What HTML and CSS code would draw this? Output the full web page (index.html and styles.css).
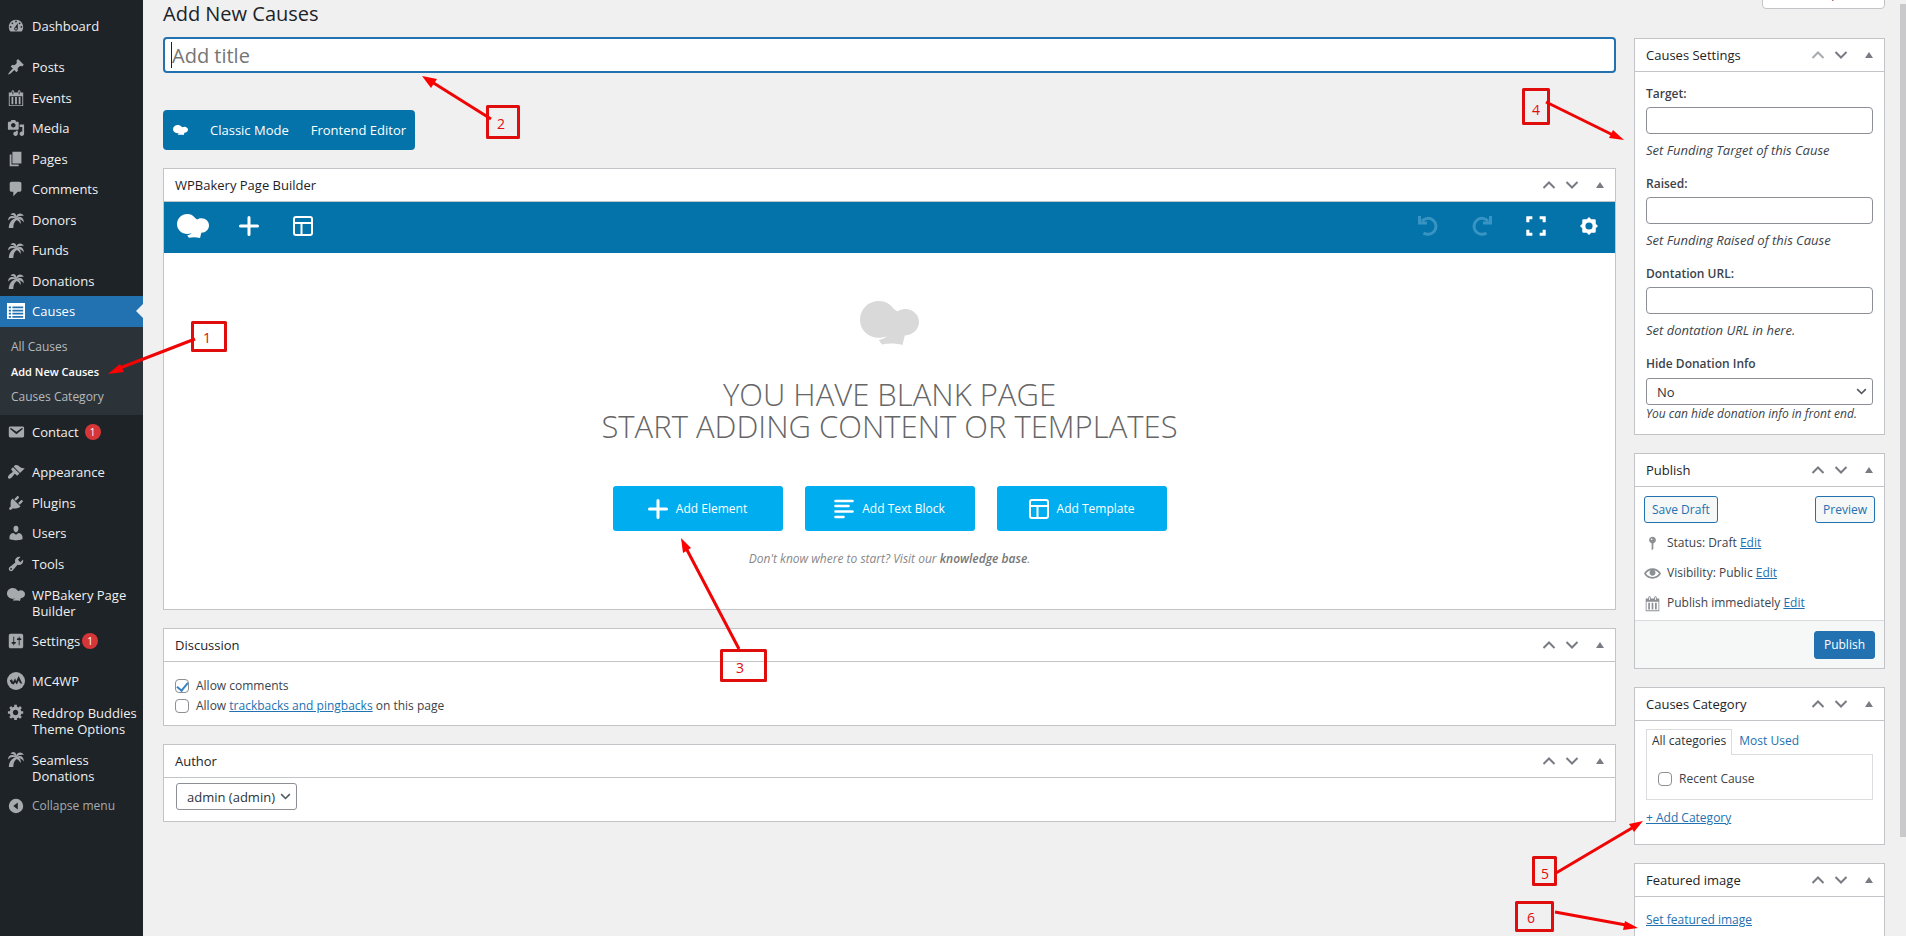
FILE: index.html
```html
<!DOCTYPE html>
<html lang="en">
<head>
<meta charset="utf-8">
<title>Add New Causes</title>
<link rel="stylesheet" href="styles.css">
</head>
<body>
<svg class="sprite" aria-hidden="true">
  <symbol id="i-dashboard" viewBox="0 0 20 20"><path fill-rule="evenodd" d="M3.76 16h12.48c1.1-1.37 1.76-3.11 1.76-5 0-4.42-3.58-8-8-8s-8 3.58-8 8c0 1.89.66 3.63 1.76 5zM10 4c.55 0 1 .45 1 1s-.45 1-1 1-1-.45-1-1 .45-1 1-1zM6 6c.55 0 1 .45 1 1s-.45 1-1 1-1-.45-1-1 .45-1 1-1zm8 0c.55 0 1 .45 1 1s-.45 1-1 1-1-.45-1-1 .45-1 1-1zm-5.37 5.55L12 7v6c0 1.1-.9 2-2 2s-2-.9-2-2c0-.57.24-1.08.63-1.45zM4 10c.55 0 1 .45 1 1s-.45 1-1 1-1-.45-1-1 .45-1 1-1zm12 0c.55 0 1 .45 1 1s-.45 1-1 1-1-.45-1-1 .45-1 1-1zm-5 3c0-.55-.45-1-1-1s-1 .45-1 1 .45 1 1 1 1-.45 1-1z"/></symbol>
  <symbol id="i-post" viewBox="0 0 20 20"><path d="M10.44 3.02l1.82-1.82 6.36 6.35-1.83 1.82c-1.05-.68-2.48-.57-3.41.36l-.75.75c-.92.93-1.04 2.35-.35 3.41l-1.83 1.82-2.41-2.41-2.8 2.79c-.42.42-3.38 2.71-3.8 2.29s1.86-3.39 2.28-3.81l2.79-2.79L4.1 9.36l1.83-1.82c1.05.69 2.48.57 3.4-.36l.75-.75c.93-.92 1.05-2.35.36-3.41z"/></symbol>
  <symbol id="i-calendar" viewBox="0 0 20 20"><path fill-rule="evenodd" d="M15 4h3v15H2V4h3V3c0-.41.15-.76.44-1.06.29-.29.65-.44 1.06-.44s.77.15 1.06.44c.29.3.44.65.44 1.06v1h4V3c0-.41.15-.76.44-1.06.29-.29.65-.44 1.06-.44s.77.15 1.06.44c.29.3.44.65.44 1.06v1zM6 3v2.5c0 .3.2.5.5.5s.5-.2.5-.5V3c0-.3-.2-.5-.5-.5S6 2.7 6 3zm7 0v2.5c0 .3.2.5.5.5s.5-.2.5-.5V3c0-.3-.2-.5-.5-.5s-.5.2-.5.5zm4 15V8H3v10h14zM7 9v8H5V9h2zm4 0v8H9V9h2zm4 0v8h-2V9h2z"/></symbol>
  <symbol id="i-media" viewBox="0 0 20 20"><path fill-rule="evenodd" d="M13 11V4c0-.55-.45-1-1-1h-1.67L9 1H5L3.67 3H2c-.55 0-1 .45-1 1v7c0 .55.45 1 1 1h10c.55 0 1-.45 1-1zM7 4.5c1.38 0 2.5 1.12 2.5 2.5S8.38 9.5 7 9.5 4.5 8.38 4.5 7 5.62 4.5 7 4.5zM14 6h5v10.5c0 1.38-1.12 2.5-2.5 2.5S14 17.88 14 16.5s1.12-2.5 2.5-2.5c.17 0 .34.02.5.05V9h-3V6zm-4 8.05V13h2v3.5c0 1.38-1.12 2.5-2.5 2.5S7 17.88 7 16.5 8.12 14 9.5 14c.17 0 .34.02.5.05z"/></symbol>
  <symbol id="i-pages" viewBox="0 0 20 20"><path d="M6 15V2h10v13H6zm-1 1h8v2H3V5h2v11z"/></symbol>
  <symbol id="i-comment" viewBox="0 0 20 20"><path d="M5 2h9c1.1 0 2 .9 2 2v7c0 1.1-.9 2-2 2h-2l-5 5v-5H5c-1.1 0-2-.9-2-2V4c0-1.1.9-2 2-2z"/></symbol>
  <symbol id="i-palm" viewBox="0 0 20 20"><path d="M10 8C9 5.500 7 4 4 4.200 5 1.500 9.500.800 10.800 6z"/><path d="M10 8.500C7 7 3.500 7.500 1.500 10.500 .800 7 4 4 9.800 6.200z"/><path d="M9.800 7.500C11 2.500 15.500 1 18.800 5.400 15.500 4.800 12.500 5.500 10.300 8z"/><path d="M10 8C14 5.200 19.200 7 18.500 12.800 17.200 9.800 14 8.500 10 9z"/><path d="M10 8C14 8.300 16.200 10.500 15 14.500 13.500 11.500 12 10.200 9.500 9.800z"/><path d="M2 19C2 13.500 4.800 9.600 9.600 7.800L10.800 10C8 12 7 15 7 19z"/></symbol>
  <symbol id="i-list" viewBox="0 0 20 20"><path fill-rule="evenodd" d="M0 1h20v18H0zM2 5h2.500v2H2zm4 0h12v2H6zM2 8.500h2.500v2H2zm4 0h12v2H6zM2 12h2.500v2H2zm4 0h12v2H6zM2 15.500h2.500v2H2zm4 0h12v2H6z"/></symbol>
  <symbol id="i-email" viewBox="0 0 20 20"><path fill-rule="evenodd" d="M3.870 4h13.250C18.370 4 19 4.590 19 5.790v8.420c0 1.190-.63 1.790-1.880 1.790H3.870c-1.250 0-1.880-.6-1.880-1.790V5.790c0-1.200.63-1.790 1.880-1.790zm6.620 8.600l6.740-5.530c.24-.2.43-.66.13-1.070-.29-.41-.82-.42-1.170-.17l-5.700 3.860L4.800 5.830c-.35-.25-.88-.24-1.170.17-.3.41-.11.87.13 1.070z"/></symbol>
  <symbol id="i-brush" viewBox="0 0 20 20"><path d="M14.480 11.060L7.410 3.990l1.500-1.500c.5-.56 2.300-.47 3.510.32 1.210.8 1.430 1.280 2.910 2.100 1.180.64 2.450 1.260 4.450.85zm-.71.71L6.700 4.700 4.930 6.470c-.39.39-.39 1.020 0 1.410l1.060 1.060c.39.39.39 1.030 0 1.420-.6.6-1.430 1.110-2.210 1.690-.35.26-.7.53-1.010.84C1.430 14.230.4 16.080 1.400 17.070c.99 1 2.840-.03 4.180-1.360.31-.31.58-.66.85-1.020.57-.78 1.080-1.610 1.690-2.210.39-.39 1.020-.39 1.410 0l1.060 1.060c.39.39 1.020.39 1.410 0z"/></symbol>
  <symbol id="i-plug" viewBox="0 0 20 20"><path d="M13.110 4.360L9.870 7.600 8 5.730l3.240-3.240c.35-.34 1.050-.2 1.560.32.52.51.66 1.210.31 1.550zm-8 1.770l.91-1.120 9.010 9.010-1.190.84c-.71.71-2.630 1.160-3.820 1.160H6.140L4.900 17.260c-.59.59-1.540.59-2.120 0-.59-.58-.59-1.530 0-2.120l1.240-1.240v-3.880c0-1.130.4-3.190 1.090-3.890zm7.260 3.970l3.240-3.240c.34-.35 1.040-.21 1.550.31.52.51.66 1.210.31 1.550l-3.240 3.250z"/></symbol>
  <symbol id="i-user" viewBox="0 0 20 20"><path d="M10 9.250c-2.270 0-2.730-3.440-2.730-3.440C7 4.020 7.820 2 9.970 2c2.160 0 2.980 2.020 2.710 3.810 0 0-.41 3.440-2.680 3.440zm0 2.570L12.720 10c2.390 0 4.520 2.330 4.520 4.530v2.490s-3.650 1.130-7.240 1.130c-3.650 0-7.240-1.130-7.240-1.130v-2.490c0-2.250 1.940-4.480 4.470-4.480z"/></symbol>
  <symbol id="i-wrench" viewBox="0 0 20 20"><path fill-rule="evenodd" d="M16.680 9.770c-1.340 1.340-3.300 1.670-4.950.99l-5.410 6.520c-.99.99-2.590.99-3.580 0s-.99-2.590 0-3.570l6.520-5.420c-.68-1.650-.35-3.610.99-4.950 1.280-1.280 3.120-1.620 4.720-1.060l-2.890 2.890 2.820 2.820 2.860-2.870c.53 1.580.18 3.390-1.080 4.650zM3.810 16.210c.4.39 1.040.39 1.430 0 .4-.4.4-1.040 0-1.430-.39-.4-1.030-.4-1.430 0-.39.39-.39 1.030 0 1.430z"/></symbol>
  <symbol id="i-sliders" viewBox="0 0 20 20"><path fill-rule="evenodd" d="M18 16V4c0-1.100-.9-2-2-2H4c-1.100 0-2 .9-2 2v12c0 1.100.9 2 2 2h12c1.100 0 2-.9 2-2zM8 11h1c.55 0 1 .45 1 1s-.45 1-1 1H8v1.500c0 .28-.22.5-.5.5s-.5-.22-.5-.5V13H6c-.55 0-1-.45-1-1s.45-1 1-1h1V5.500c0-.28.22-.5.5-.5s.5.22.5.5V11zm5-2h-1c-.55 0-1-.45-1-1s.45-1 1-1h1V5.500c0-.28.22-.5.5-.5s.5.22.5.5V7h1c.55 0 1 .45 1 1s-.45 1-1 1h-1v5.500c0 .28-.22.5-.5.5s-.5-.22-.5-.5V9z"/></symbol>
  <symbol id="i-mc" viewBox="0 0 20 20"><circle cx="10" cy="10" r="10"/><path class="cut" d="M3 9.500L5.500 8l1.200 3L9 7l1.200 3.200L13 4.500l4 8.500-2.500-.5L13 9.500l-2 4.500-2-2.500L7.500 14 5 13z"/></symbol>
  <symbol id="i-gear" viewBox="0 0 20 20"><path fill-rule="evenodd" d="M18 12h-2.180c-.17.7-.44 1.350-.81 1.930l1.540 1.540-2.100 2.100-1.540-1.540c-.58.36-1.230.63-1.910.79V19H8v-2.180c-.68-.16-1.330-.43-1.910-.79l-1.540 1.540-2.120-2.120 1.540-1.540c-.36-.58-.63-1.230-.79-1.910H1V9.030h2.170c.16-.7.44-1.350.8-1.940L2.430 5.550l2.100-2.100 1.540 1.540c.58-.37 1.240-.64 1.930-.81V2h3v2.180c.68.16 1.330.43 1.910.79l1.540-1.540 2.120 2.120-1.540 1.540c.36.59.64 1.240.8 1.940H18V12zm-8.500 1.500c1.660 0 3-1.340 3-3s-1.340-3-3-3-3 1.340-3 3 1.340 3 3 3z"/></symbol>
  <symbol id="i-collapse" viewBox="0 0 20 20"><path fill-rule="evenodd" d="M10 2a8 8 0 1 1 0 16 8 8 0 0 1 0-16zm2 4v8l-5-4z"/></symbol>
  <symbol id="i-pin" viewBox="0 0 20 20"><path fill-rule="evenodd" d="M14 6c0 1.860-1.280 3.410-3 3.860V16c0 1-2 2-2 2V9.860c-1.720-.45-3-2-3-3.860 0-2.210 1.790-4 4-4s4 1.790 4 4zM8 5c0 .55.45 1 1 1s1-.45 1-1-.45-1-1-1-1 .45-1 1z"/></symbol>
  <symbol id="i-eye" viewBox="0 0 20 20"><path fill-rule="evenodd" d="M19.700 9.400C17.700 6 14 3.900 10 3.900S2.300 6 .3 9.400L0 10l.3.6c2 3.400 5.700 5.500 9.700 5.500s7.700-2.100 9.700-5.500l.3-.6zM10 14.100c-3.100 0-6-1.600-7.700-4.100C3.600 8 5.700 6.600 8 6.100c-.9.6-1.500 1.700-1.500 2.900 0 1.900 1.600 3.500 3.500 3.500s3.500-1.600 3.500-3.500c0-1.200-.6-2.300-1.500-2.900 2.300.5 4.400 1.900 5.700 3.900-1.700 2.500-4.600 4.100-7.700 4.100z"/></symbol>
  <symbol id="i-cloud" viewBox="0 0 50 44" preserveAspectRatio="none"><path d="M16 0c6 0 9 3 12 7 2 2.500 4 4 7 4.200-1 .3-2.300.2-3.500-.4C33.500 8.800 36 8 38 8c7 0 12 6 12 13s-5 13-12 13.500L36 44c-6-2-12-2-17.500-.5L16 39c3-.7 5.500-2 7-3.700-2.500 1-5 1.600-8 1.500C6 36 0 28 0 19 0 8 7 0 16 0z"/></symbol>
  <symbol id="i-plus" viewBox="0 0 20 20"><path d="M10 1.500v17M1.500 10h17" fill="none" stroke="currentColor" stroke-width="3" stroke-linecap="round"/></symbol>
  <symbol id="i-layout" viewBox="0 0 20 20"><path d="M3 1h14q2 0 2 2v14q0 2-2 2H3q-2 0-2-2V3q0-2 2-2zM1 7h18M8.500 7v12" fill="none" stroke="currentColor" stroke-width="2"/></symbol>
  <symbol id="i-text" viewBox="0 0 20 20"><path d="M1.500 2h17M1.500 7h13M1.500 12.500h17M1.500 18h8" fill="none" stroke="currentColor" stroke-width="2.600" stroke-linecap="round"/></symbol>
  <symbol id="i-undo" viewBox="0 0 20 20"><path d="M5.500 17A8 8 0 1 0 4 5M1.500 0v7H9" fill="none" stroke="currentColor" stroke-width="3"/></symbol>
  <symbol id="i-full" viewBox="0 0 22 22"><path d="M2 7V2h5M15 2h5v5M20 15v5h-5M7 20H2v-5" fill="none" stroke="currentColor" stroke-width="3.400"/></symbol>
  <symbol id="i-cog" viewBox="0 0 20 20"><path fill-rule="evenodd" d="M10 0l2.500 2.500H16q1.500 0 1.500 1.500v3.500L20 10l-2.500 2.500V16q0 1.500-1.500 1.500h-3.500L10 20l-2.500-2.500H4q-1.500 0-1.500-1.500v-3.500L0 10l2.500-2.500V4q0-1.500 1.500-1.500h3.500zm0 6a4 4 0 1 0 0 8 4 4 0 0 0 0-8z"/></symbol>
  <symbol id="i-up" viewBox="0 0 14 14"><path d="M1.500 10L7 4.500 12.500 10" fill="none" stroke="currentColor" stroke-width="2"/></symbol>
  <symbol id="i-down" viewBox="0 0 14 14"><path d="M1.500 4L7 9.500 12.500 4" fill="none" stroke="currentColor" stroke-width="2"/></symbol>
  <symbol id="i-tri" viewBox="0 0 8 6"><path d="M4 0l4 6H0z"/></symbol>
</svg>

<div class="shell">
  <nav class="menu" aria-label="Main menu">
    <ul class="menu-group">
      <li><a class="item" href="#"><svg class="icon"><use href="#i-dashboard"/></svg>Dashboard</a></li>
    </ul>
    <ul class="menu-group">
      <li><a class="item" href="#"><svg class="icon"><use href="#i-post"/></svg>Posts</a></li>
      <li><a class="item" href="#"><svg class="icon"><use href="#i-calendar"/></svg>Events</a></li>
      <li><a class="item" href="#"><svg class="icon"><use href="#i-media"/></svg>Media</a></li>
      <li><a class="item" href="#"><svg class="icon"><use href="#i-pages"/></svg>Pages</a></li>
      <li><a class="item" href="#"><svg class="icon"><use href="#i-comment"/></svg>Comments</a></li>
      <li><a class="item" href="#"><svg class="icon"><use href="#i-palm"/></svg>Donors</a></li>
      <li><a class="item" href="#"><svg class="icon"><use href="#i-palm"/></svg>Funds</a></li>
      <li><a class="item" href="#"><svg class="icon"><use href="#i-palm"/></svg>Donations</a></li>
      <li><a class="item current" href="#"><svg class="icon"><use href="#i-list"/></svg>Causes</a>
        <ul class="submenu">
          <li><a href="#">All Causes</a></li>
          <li><a class="active" href="#">Add New Causes</a></li>
          <li><a href="#">Causes Category</a></li>
        </ul>
      </li>
      <li><a class="item" href="#"><svg class="icon"><use href="#i-email"/></svg>Contact <span class="count wide">1</span></a></li>
    </ul>
    <ul class="menu-group">
      <li><a class="item" href="#"><svg class="icon"><use href="#i-brush"/></svg>Appearance</a></li>
      <li><a class="item" href="#"><svg class="icon"><use href="#i-plug"/></svg>Plugins</a></li>
      <li><a class="item" href="#"><svg class="icon"><use href="#i-user"/></svg>Users</a></li>
      <li><a class="item" href="#"><svg class="icon"><use href="#i-wrench"/></svg>Tools</a></li>
      <li><a class="item two-line" href="#"><svg class="icon cloud"><use href="#i-cloud"/></svg>WPBakery Page<br>Builder</a></li>
      <li><a class="item" href="#"><svg class="icon"><use href="#i-sliders"/></svg>Settings<span class="count">1</span></a></li>
    </ul>
    <ul class="menu-group">
      <li><a class="item" href="#"><svg class="icon"><use href="#i-mc"/></svg>MC4WP</a></li>
      <li><a class="item two-line" href="#"><svg class="icon"><use href="#i-gear"/></svg>Reddrop Buddies<br>Theme Options</a></li>
      <li><a class="item two-line" href="#"><svg class="icon"><use href="#i-palm"/></svg>Seamless<br>Donations</a></li>
      <li><button class="item collapse" type="button"><svg class="icon"><use href="#i-collapse"/></svg>Collapse menu</button></li>
    </ul>
  </nav>

  <main class="content">
    <h1 class="page-title">Add New Causes</h1>
    <button class="screen-options" type="button">Screen Options</button>
    <div class="columns">
      <div class="primary">
        <input class="title-input" type="text" placeholder="Add title" aria-label="Add title">
        <div class="mode-switch">
          <svg class="mode-logo"><use href="#i-cloud"/></svg>
          <button type="button">Classic Mode</button>
          <button type="button">Frontend Editor</button>
        </div>

        <section class="box">
          <header class="box-head"><h2>WPBakery Page Builder</h2>
            <div class="handles"><button type="button" aria-label="Move up"><svg><use href="#i-up"/></svg></button><button type="button" aria-label="Move down"><svg><use href="#i-down"/></svg></button><button class="toggle" type="button" aria-label="Toggle panel"><svg><use href="#i-tri"/></svg></button></div>
          </header>
          <div class="toolbar">
            <svg class="brand"><use href="#i-cloud"/></svg>
            <button type="button" aria-label="Add element"><svg><use href="#i-plus"/></svg></button>
            <button type="button" aria-label="Templates"><svg><use href="#i-layout"/></svg></button>
            <span class="spacer"></span>
            <button type="button" disabled aria-label="Undo"><svg><use href="#i-undo"/></svg></button>
            <button type="button" disabled aria-label="Redo"><svg class="flip"><use href="#i-undo"/></svg></button>
            <button type="button" aria-label="Full screen"><svg><use href="#i-full"/></svg></button>
            <button type="button" aria-label="Page settings"><svg class="cog"><use href="#i-cog"/></svg></button>
          </div>
          <div class="blank">
            <svg class="blank-logo"><use href="#i-cloud"/></svg>
            <h3>YOU HAVE BLANK PAGE<br>START ADDING CONTENT OR TEMPLATES</h3>
            <div class="actions">
              <button type="button"><svg><use href="#i-plus"/></svg>Add Element</button>
              <button type="button"><svg><use href="#i-text"/></svg>Add Text Block</button>
              <button type="button"><svg><use href="#i-layout"/></svg>Add Template</button>
            </div>
            <p class="tip">Don't know where to start? Visit our <a href="#">knowledge base</a>.</p>
          </div>
        </section>

        <section class="box">
          <header class="box-head"><h2>Discussion</h2>
            <div class="handles"><button type="button" aria-label="Move up"><svg><use href="#i-up"/></svg></button><button type="button" aria-label="Move down"><svg><use href="#i-down"/></svg></button><button class="toggle" type="button" aria-label="Toggle panel"><svg><use href="#i-tri"/></svg></button></div>
          </header>
          <div class="discussion">
            <label class="check"><input type="checkbox" checked><span>Allow comments</span></label>
            <label class="check"><input type="checkbox"><span>Allow <a href="#">trackbacks and pingbacks</a> on this page</span></label>
          </div>
        </section>

        <section class="box">
          <header class="box-head"><h2>Author</h2>
            <div class="handles"><button type="button" aria-label="Move up"><svg><use href="#i-up"/></svg></button><button type="button" aria-label="Move down"><svg><use href="#i-down"/></svg></button><button class="toggle" type="button" aria-label="Toggle panel"><svg><use href="#i-tri"/></svg></button></div>
          </header>
          <div class="author">
            <span class="select"><select aria-label="Author"><option>admin (admin)</option></select><svg><use href="#i-down"/></svg></span>
          </div>
        </section>
      </div>

      <aside class="secondary">
        <section class="box">
          <header class="box-head"><h2>Causes Settings</h2>
            <div class="handles"><button type="button" disabled aria-label="Move up"><svg><use href="#i-up"/></svg></button><button type="button" aria-label="Move down"><svg><use href="#i-down"/></svg></button><button class="toggle" type="button" aria-label="Toggle panel"><svg><use href="#i-tri"/></svg></button></div>
          </header>
          <div class="fields">
            <div class="field"><label for="target">Target:</label><input id="target" type="text"><p>Set Funding Target of this Cause</p></div>
            <div class="field"><label for="raised">Raised:</label><input id="raised" type="text"><p>Set Funding Raised of this Cause</p></div>
            <div class="field"><label for="url">Dontation URL:</label><input id="url" type="text"><p>Set dontation URL in here.</p></div>
            <div class="field tight"><label for="hide">Hide Donation Info</label><span class="select"><select id="hide"><option>No</option></select><svg><use href="#i-down"/></svg></span><p>You can hide donation info in front end.</p></div>
          </div>
        </section>

        <section class="box">
          <header class="box-head"><h2>Publish</h2>
            <div class="handles"><button type="button" aria-label="Move up"><svg><use href="#i-up"/></svg></button><button type="button" aria-label="Move down"><svg><use href="#i-down"/></svg></button><button class="toggle" type="button" aria-label="Toggle panel"><svg><use href="#i-tri"/></svg></button></div>
          </header>
          <div class="publish-actions"><button class="btn" type="button">Save Draft</button><button class="btn" type="button">Preview</button></div>
          <ul class="status">
            <li><svg><use href="#i-pin"/></svg><span>Status: <b>Draft</b> <a href="#">Edit</a></span></li>
            <li><svg><use href="#i-eye"/></svg><span>Visibility: <b>Public</b> <a href="#">Edit</a></span></li>
            <li><svg><use href="#i-calendar"/></svg><span><b>Publish immediately</b> <a href="#">Edit</a></span></li>
          </ul>
          <footer class="publish-foot"><button class="btn primary-btn" type="button">Publish</button></footer>
        </section>

        <section class="box">
          <header class="box-head"><h2>Causes Category</h2>
            <div class="handles"><button type="button" aria-label="Move up"><svg><use href="#i-up"/></svg></button><button type="button" aria-label="Move down"><svg><use href="#i-down"/></svg></button><button class="toggle" type="button" aria-label="Toggle panel"><svg><use href="#i-tri"/></svg></button></div>
          </header>
          <div class="category">
            <div class="tabs"><a class="tab on" href="#">All categories</a><a class="tab" href="#">Most Used</a></div>
            <div class="tab-panel"><label class="check"><input type="checkbox"><span>Recent Cause</span></label></div>
            <a class="add" href="#">+ Add Category</a>
          </div>
        </section>

        <section class="box">
          <header class="box-head"><h2>Featured image</h2>
            <div class="handles"><button type="button" aria-label="Move up"><svg><use href="#i-up"/></svg></button><button type="button" aria-label="Move down"><svg><use href="#i-down"/></svg></button><button class="toggle" type="button" aria-label="Toggle panel"><svg><use href="#i-tri"/></svg></button></div>
          </header>
          <div class="featured"><a href="#">Set featured image</a></div>
        </section>
      </aside>
    </div>
  </main>
  <div class="scroll-thumb"></div>

  <svg class="notes" width="1906" height="936" viewBox="0 0 1906 936">
    <g fill="none" stroke="#e00d0d" stroke-width="3" stroke-linejoin="round">
      <rect x="192.500" y="322.500" width="33" height="28"/>
      <rect x="487.500" y="106.500" width="31" height="31"/>
      <rect x="721.500" y="650.500" width="44" height="30"/>
      <rect x="1523.500" y="89.500" width="25" height="34"/>
      <rect x="1533.500" y="857.500" width="22" height="27"/>
      <rect x="1516.500" y="902.500" width="36" height="28"/>
    </g>
    <g stroke="#f00505" stroke-width="3">
      <path d="M195 339L120 368"/><path d="M491 119L432 82"/><path d="M739 649L686 548"/>
      <path d="M1546 102L1613 135"/><path d="M1556 873L1632 828"/><path d="M1555 912L1626 925"/>
    </g>
    <g fill="#ff0000">
      <path d="M108 374l12-10 4 8z"/><path d="M422 76l15 3-6 9z"/><path d="M681 538l10 10-8 5z"/>
      <path d="M1624 140l-11-10-4 8z"/><path d="M1643 821l-14 3 5 8z"/><path d="M1638 928l-13-7-2 9z"/>
    </g>
    <g class="note-text" fill="#e00d0d">
      <text x="203" y="343">1</text><text x="497" y="129">2</text><text x="736" y="673">3</text>
      <text x="1532" y="115">4</text><text x="1541" y="879">5</text><text x="1527" y="923">6</text>
    </g>
  </svg>
</div>
</body>
</html>
```

FILE: styles.css
```css
* { box-sizing: border-box; }
html { overflow: hidden; }
body { margin: 0; background: #f0f0f1; color: #3c434a; font: 12px/18px "Open Sans", "Noto Sans", sans-serif; }
ul { list-style: none; margin: 0; padding: 0; }
h1, h2, h3, p { margin: 0; font-weight: 400; }
a { color: #2271b1; }
button, input, select { font: inherit; color: inherit; margin: 0; }
button { border: 0; background: none; padding: 0; cursor: pointer; }
svg { display: block; fill: currentColor; }
.sprite { position: absolute; width: 0; height: 0; }
.cut { fill: #1d2327; }

.shell { display: flex; position: relative; min-height: 100vh; }

/* Admin menu */
.menu { flex: 0 0 143px; background: #1d2327; padding-top: 11px; display: flex; flex-direction: column; gap: 10px; }
.item { display: flex; width: 100%; min-height: 31px; padding: 7px 0 7px 32px; position: relative; color: #f0f0f1; font-size: 13px; line-height: 16px; text-decoration: none; white-space: nowrap; text-align: left; }
li:nth-child(even) > .item { min-height: 30px; }
.item.two-line { padding-top: 8px; }
.item .icon { position: absolute; left: 7px; top: 6px; width: 18px; height: 18px; color: #a7aaad; }
.item .icon.cloud { top: 9px; height: 13px; }
.item.current { background: #2271b1; color: #fff; }
.item.current .icon { color: #fff; }
.item.current::after { content: ""; position: absolute; right: 0; top: 8px; border: 7px solid transparent; border-left: 0; border-right-color: #f0f0f1; }
.item.collapse { color: #a7aaad; font-size: 12px; }
.count { width: 16px; height: 16px; margin-left: 2px; border-radius: 8px; background: #d63638; color: #fff; font-size: 10px; text-align: center; }
.count.wide { margin-left: 6px; }
.submenu { background: #2c3338; padding: 7px 0 6px 11px; margin-bottom: 2px; }
.submenu a { display: block; padding: 4px 0 3px; color: #b4b9be; font-size: 12px; text-decoration: none; }
.submenu a.active { color: #fff; font-size: 11px; font-weight: 600; }

/* Page */
.content { flex: 1; min-width: 0; padding: 0 21px 0 20px; overflow: hidden; height: 100vh; position: relative; }
.page-title { color: #1d2327; font-size: 20px; line-height: 28px; height: 37px; }
.screen-options { position: absolute; top: -24px; right: 21px; width: 123px; height: 33px; padding: 2px 0 0; border: 1px solid #c3c4c7; border-radius: 0 0 4px 4px; background: #fff; }
.columns { display: flex; gap: 18px; }
.primary { flex: 1; min-width: 0; }
.secondary { flex: 0 0 251px; padding-top: 1px; }

.title-input { display: block; width: 100%; height: 36px; padding: 0 7px; border: 2px solid #2271b1; border-radius: 4px; background: linear-gradient(#1d2327, #1d2327) 6px center / 1px 26px no-repeat #fff; font-size: 20px; outline: 0; }
.title-input::placeholder { color: #757575; opacity: 1; }
.mode-switch { display: flex; width: fit-content; align-items: center; gap: 22px; height: 40px; margin: 37px 0 18px; padding: 0 9px 0 10px; border-radius: 4px; background: #0473aa; color: #fff; }
.mode-switch button { font-size: 13px; }
.mode-logo { width: 15px; height: 10px; }

.box { background: #fff; border: 1px solid #c3c4c7; margin-bottom: 18px; }
.box-head { display: flex; justify-content: space-between; align-items: center; height: 33px; padding: 0 11px; border-bottom: 1px solid #c3c4c7; }
.box-head h2 { font-size: 13px; font-weight: 500; color: #1d2327; }
.handles { display: flex; align-items: center; gap: 9px; color: #787c82; }
.handles svg { width: 14px; height: 14px; }
.handles button:disabled { color: #a7aaad; }
.handles .toggle { margin-left: 8px; }
.handles .toggle svg { width: 8px; height: 6px; }

.toolbar { display: flex; align-items: center; height: 51px; padding: 0 17px 3px 13px; gap: 34px; background: #0473aa; color: #fff; }
.toolbar svg { width: 20px; height: 20px; }
.toolbar .brand { width: 32px; height: 24px; margin-right: -4px; }
.toolbar .cog { width: 18px; height: 18px; }
.toolbar button:disabled { color: #3894c3; }
.flip { transform: scaleX(-1); }
.spacer { flex: 1; }

.blank { display: flex; flex-direction: column; align-items: center; padding: 48px 20px 41px; }
.blank-logo { width: 59px; height: 44px; color: #d9d9d9; }
.blank h3 { margin-top: 33px; color: #666; font-size: 31px; font-weight: 300; line-height: 32px; text-align: center; }
.actions { display: flex; gap: 22px; margin-top: 44px; }
.actions button { display: flex; align-items: center; justify-content: center; gap: 8px; width: 170px; height: 45px; border-radius: 3px; background: #00aeef; color: #fff; }
.actions svg { width: 20px; height: 20px; }
.tip { margin-top: 19px; color: #888; font-style: italic; }
.tip a { color: #777; font-weight: 600; text-decoration: none; }

.discussion { padding: 14px 11px 9px; }
.check { display: flex; align-items: center; gap: 7px; height: 20px; }
.check input { appearance: none; width: 14px; height: 14px; border: 1px solid #8c8f94; border-radius: 4px; background: #fff; display: grid; place-items: center; }
.check input:checked::before { content: ""; width: 5px; height: 9px; border: solid #3582c4; border-width: 0 2px 2px 0; transform: rotate(40deg); margin-bottom: 2px; }
.author { padding: 5px 12px 11px; }
.select { display: inline-block; position: relative; vertical-align: top; }
.select select { appearance: none; width: 100%; height: 27px; padding: 0 21px 0 10px; border: 1px solid #8c8f94; border-radius: 3px; background: #fff; color: #2c3338; font-size: 13px; }
.select svg { position: absolute; right: 6px; top: 8px; width: 11px; height: 11px; color: #50575e; pointer-events: none; }

/* Side boxes */
.fields { display: flex; flex-direction: column; gap: 16px; padding: 13px 11px 11px; }
.field label { display: block; font-weight: 600; margin-bottom: 4px; }
.field input { display: block; width: 100%; height: 27px; border: 1px solid #8c8f94; border-radius: 4px; background: #fff; }
.field p { margin-top: 7px; font-size: 13px; font-style: italic; }
.field .select { display: block; }
.field.tight label { margin-bottom: 5px; }
.field.tight p { margin-top: 0; font-size: 12px; }
.btn { height: 27px; padding: 0 7px; border: 1px solid #2271b1; border-radius: 3px; background: #f6f7f7; color: #2271b1; }
.primary-btn { height: 28px; padding: 0 9px; background: #2271b1; color: #fff; }
.publish-actions { display: flex; justify-content: space-between; padding: 9px; }
.status { display: flex; flex-direction: column; gap: 12px; padding: 2px 9px 8px; }
.status li { display: flex; align-items: center; gap: 6px; }
.status svg { width: 17px; height: 17px; color: #8c8f94; }
.status b { font-weight: 500; }
.publish-foot { display: flex; justify-content: flex-end; padding: 10px 9px 9px; border-top: 1px solid #dcdcde; background: #f6f7f7; }
.category { padding: 8px 11px 17px; }
.tabs { display: flex; }
.tab { padding: 3px 7px 4px; text-decoration: none; }
.tab.on { padding: 2px 5px 5px; border: 1px solid #dcdcde; border-bottom: 0; background: #fff; color: #2c3338; margin-bottom: -1px; position: relative; }
.tab-panel { padding: 14px 11px 10px; border: 1px solid #dcdcde; }
.add { display: inline-block; margin-top: 9px; }
.featured { padding: 14px 11px; }

.scroll-thumb { position: absolute; right: 0; top: 4px; width: 6px; height: 833px; background: #c9c9cb; }
.notes { position: absolute; left: 0; top: 0; pointer-events: none; fill: none; }
.note-text { font-size: 14px; }
```
